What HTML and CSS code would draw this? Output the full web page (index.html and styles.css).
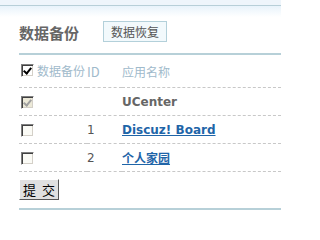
FILE: index.html
```html
<!DOCTYPE html>
<html lang="zh-CN">
<head>
<meta charset="utf-8">
<link rel="stylesheet" href="styles.css">
</head>
<body>
<div class="page">
<div class="topbar"></div>
<div class="main">
  <div class="title-row">
    <h3 class="title">数据备份</h3>
    <button class="tab-btn" type="button">数据恢复</button>
  </div>
  <table class="list">
    <tr class="head">
      <td class="c1"><label class="chk"><input class="cb" type="checkbox" checked>数据备份</label></td>
      <td class="c2">ID</td>
      <td class="c3">应用名称</td>
    </tr>
    <tr>
      <td class="c1"><input class="cb" type="checkbox" checked disabled></td>
      <td class="c2"></td>
      <td class="c3"><strong class="name">UCenter</strong></td>
    </tr>
    <tr>
      <td class="c1"><input class="cb" type="checkbox"></td>
      <td class="c2">1</td>
      <td class="c3"><a class="link" href="#">Discuz! Board</a></td>
    </tr>
    <tr>
      <td class="c1"><input class="cb" type="checkbox"></td>
      <td class="c2">2</td>
      <td class="c3"><a class="link" href="#">个人家园</a></td>
    </tr>
  </table>
  <div class="actions"><button class="submit" type="button">提 交</button></div>
  <div class="bottom-line"></div>
</div>
</div>
</body>
</html>
```
FILE: styles.css
```css
html, body {
  margin: 0;
  padding: 0;
  background: #fff;
  font-family: "DejaVu Sans", "Noto Sans CJK SC", sans-serif;
  font-size: 12px;
  color: #555;
}
.page {
  width: 281px;
  height: 216px;
  overflow: hidden;
  background: linear-gradient(to bottom, #eef5fb 0, #eef5fb 5px, #b7cfd8 5px, #b7cfd8 6px, #e8f3fb 6px, #fff 17px) no-repeat;
}
.topbar {
  height: 6px;
}
.main {
  padding-left: 19px;
}
.title-row {
  display: flex;
  align-items: center;
  gap: 24px;
  height: 41px;
  padding-top: 6px;
  border-bottom: 2px solid #b7d0d8;
}
.title {
  margin: 0;
  font-family: "Noto Sans CJK SC", sans-serif;
  font-size: 15px;
  font-weight: bold;
  color: #666;
}
.tab-btn {
  font-family: "Noto Sans CJK SC", sans-serif;
  font-size: 12px;
  color: #555;
  background: #f2f9fc;
  border: 1px solid #b3d0da;
  padding: 0 7px;
  height: 21px;
  line-height: 19px;
  margin-top: -2px;
}
.list {
  border-collapse: collapse;
  width: 100%;
}
.list td {
  border-bottom: 1px dashed #c8c8c8;
  height: 27px;
  padding: 0;
  vertical-align: middle;
}
.list tr.head td {
  height: 32px;
  color: #9fbacb;
  font-family: "Noto Sans CJK SC", sans-serif;
}
.c1 { width: 68px; }
.c2 { width: 35px; font-family: "DejaVu Sans", sans-serif; }
.head .c2 { font-family: "DejaVu Serif", serif; font-size: 13px; }
.cb {
  -webkit-appearance: none;
  appearance: none;
  position: relative;
  box-sizing: border-box;
  width: 13px;
  height: 13px;
  margin: 0 0 0 2px;
  vertical-align: middle;
  background: #fff;
  border: 1px solid;
  border-color: #808080 #fff #fff #808080;
  box-shadow: inset 1px 1px 0 #404040, inset -1px -1px 0 #d4d0c8;
}
.cb:not(:checked) { background: #fbfbf6; }
.cb:checked::after {
  content: "";
  position: absolute;
  left: 3px;
  top: 1px;
  width: 3px;
  height: 6px;
  border: solid #000;
  border-width: 0 2px 2px 0;
  transform: rotate(40deg);
}
.cb:disabled { background: #ece9d8; }
.cb:disabled::after { border-color: #a0a0a0; }
.chk { display: inline-flex; align-items: center; gap: 3px; }
.name {
  font-weight: bold;
  color: #666;
}
.link {
  font-weight: bold;
  color: #1f65a8;
  text-decoration: underline;
}
.actions { padding-top: 7px; }
.submit {
  font-family: "Noto Sans CJK SC", sans-serif;
  font-size: 13px;
  word-spacing: 3px;
  color: #000;
  background: #e0e0e0;
  border: 1px solid;
  border-color: #fff #555 #555 #fff;
  height: 21px;
  width: 40px;
  padding: 0;
  line-height: 18px;
}
.bottom-line {
  margin-top: 8px;
  height: 2px;
  background: #b7d0d8;
}
```
